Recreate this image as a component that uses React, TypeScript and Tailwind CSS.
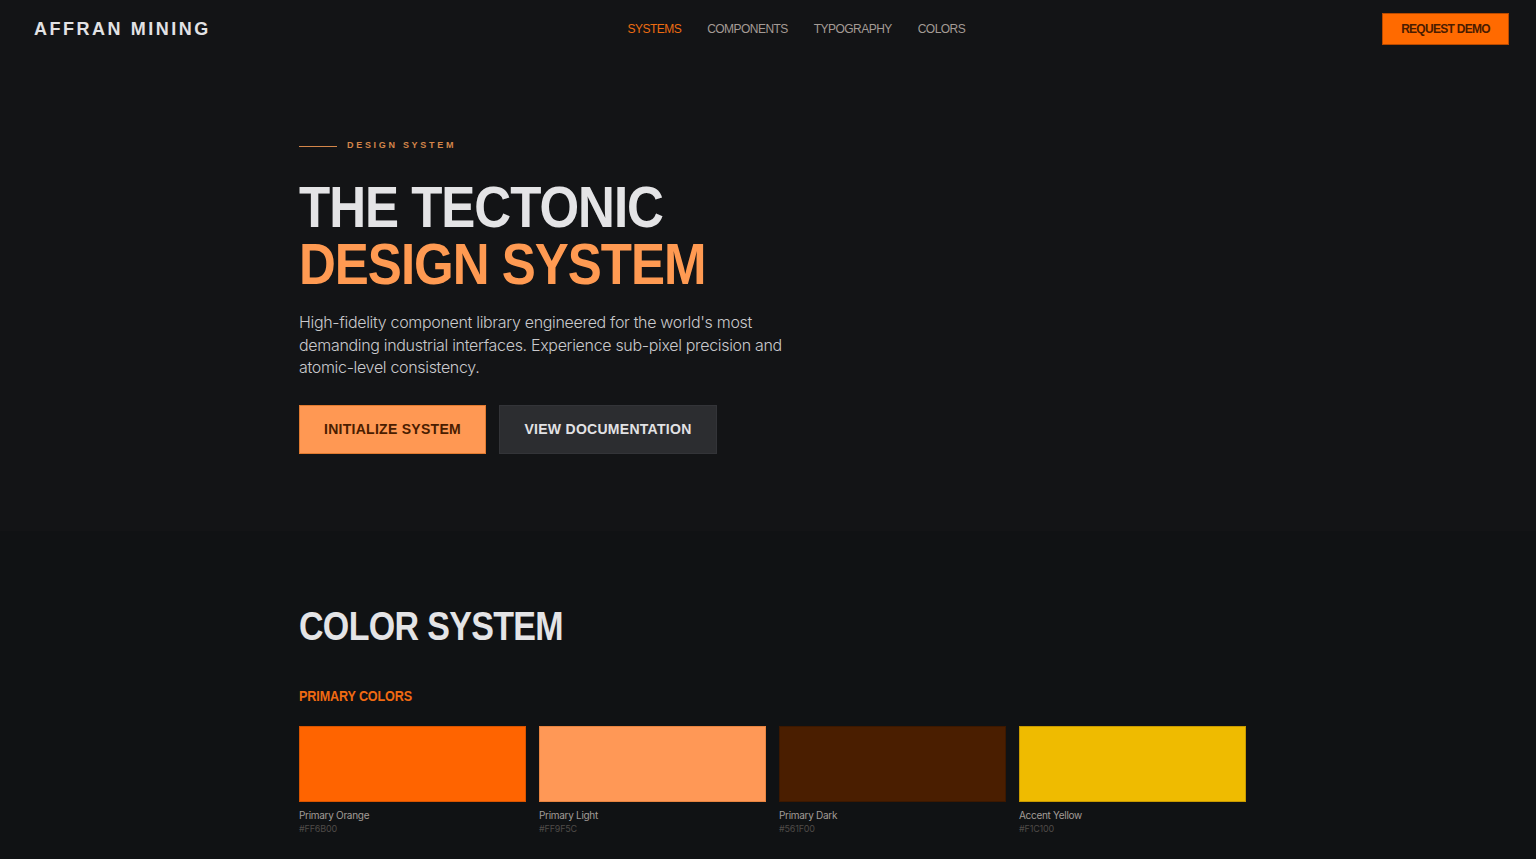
import React from "react";

const navItems = [
  { label: "SYSTEMS", active: true },
  { label: "COMPONENTS", active: false },
  { label: "TYPOGRAPHY", active: false },
  { label: "COLORS", active: false },
];

const primaryColors = [
  { name: "Primary Orange", hex: "#FF6B00", className: "bg-[#ff6400] border-[#d85400]" },
  { name: "Primary Light", hex: "#FF9F5C", className: "bg-[#ff9856] border-[#e88440]" },
  { name: "Primary Dark", hex: "#561F00", className: "bg-[#4a1e00] border-[#3c1800]" },
  { name: "Accent Yellow", hex: "#F1C100", className: "bg-[#efbb00] border-[#c89a00]" },
];

// condensed display face: squeeze Liberation Sans horizontally
const display = "font-['Liberation_Sans',Arial,sans-serif] origin-left";
const body = "font-['Inter','Noto_Sans',sans-serif]";

function Header() {
  return (
    <header className="h-[58px] flex items-center justify-between pl-[34px] pr-[27px] font-['Liberation_Sans',Arial,sans-serif]">
      <div className="text-[18px] font-bold tracking-[0.14em] text-[#e2e2e4]">AFFRAN MINING</div>
      <nav className="flex items-center gap-[26px] text-[12px] tracking-[-0.045em]">
        {navItems.map((item) => (
          <a
            key={item.label}
            className={item.active ? "text-[#ec6c12]" : "text-[#a49b95]"}
          >
            {item.label}
          </a>
        ))}
      </nav>
      <button className="h-[32px] w-[127px] bg-[#ff6a00] border border-[#b84a00] text-[#4a1c00] text-[12px] font-bold tracking-[-0.06em]">
        REQUEST DEMO
      </button>
    </header>
  );
}

function Hero() {
  return (
    <section className="pt-[82px] pb-[77px]">
      <div className="max-w-[1024px] mx-auto px-[43px]">
        <div className="flex items-center gap-[10px] h-[12px]">
          <span className="w-[38px] h-px bg-[#d4864a]" />
          <span className="text-[9px] font-bold tracking-[0.3em] text-[#d4864a] font-['Liberation_Sans',Arial,sans-serif]">
            DESIGN SYSTEM
          </span>
        </div>
        <h1 className={`${display} scale-x-[0.88] mt-[26px] text-[58px] leading-[57px] font-bold tracking-[-0.02em] text-[#e4e4e6]`}>
          THE TECTONIC
          <br />
          <span className="text-[#ff9a52]">DESIGN SYSTEM</span>
        </h1>
        <p className={`${body} mt-[19px] max-w-[495px] text-[16px] leading-[22.5px] font-light tracking-[-0.02em] text-[#c9c9cc]`}>
          High-fidelity component library engineered for the world's most demanding industrial
          interfaces. Experience sub-pixel precision and atomic-level consistency.
        </p>
        <div className="mt-[26px] flex gap-[13px] font-['Liberation_Sans',Arial,sans-serif]">
          <button className="h-[49px] w-[187px] bg-[#ff9853] border border-[#e07a30] text-[#4a1d00] text-[14px] font-bold tracking-[0.02em]">
            INITIALIZE SYSTEM
          </button>
          <button className="h-[49px] w-[218px] bg-[#2c2d30] border border-[#333438] text-[#e2e2e4] text-[14px] font-bold tracking-[0.02em]">
            VIEW DOCUMENTATION
          </button>
        </div>
      </div>
    </section>
  );
}

function ColorSystem() {
  return (
    <section className="bg-[#101214] pt-[75px] pb-[40px]">
      <div className="max-w-[1024px] mx-auto px-[43px]">
        <h2 className={`${display} scale-x-[0.85] text-[40px] leading-[40px] font-bold tracking-[-0.02em] text-[#e4e4e6]`}>
          COLOR SYSTEM
        </h2>
        <h3 className={`${display} scale-x-[0.9] mt-[40px] text-[14px] leading-[20px] font-bold tracking-[-0.01em] text-[#f06a12]`}>
          PRIMARY COLORS
        </h3>
        <div className="mt-[20px] grid grid-cols-[repeat(4,227px)] gap-[13px]">
          {primaryColors.map((c) => (
            <div key={c.name}>
              <div className={`h-[76px] border ${c.className}`} />
              <div className={`${body} mt-[6px] text-[10px] leading-[14px] tracking-[-0.03em] text-[#a29c97]`}>{c.name}</div>
              <div className={`${body} text-[9px] leading-[13px] tracking-[-0.02em] text-[#4f4b48]`}>{c.hex}</div>
            </div>
          ))}
        </div>
      </div>
    </section>
  );
}

export default function App() {
  return (
    <div className="min-h-screen bg-[#131416]">
      <Header />
      <Hero />
      <ColorSystem />
    </div>
  );
}
